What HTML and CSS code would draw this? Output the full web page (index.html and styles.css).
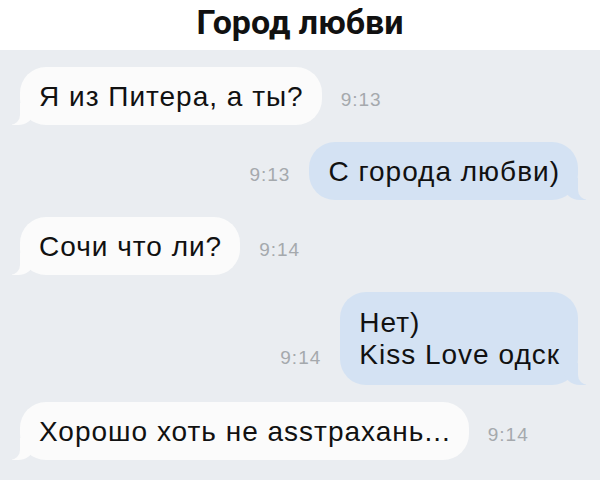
FILE: index.html
```html
<!DOCTYPE html>
<html lang="ru">
<head>
    <meta charset="UTF-8">
    <meta name="viewport" content="width=device-width, initial-scale=1.0">
    <title>Город любви</title>
    <link rel="stylesheet" href="styles.css">
</head>
<body>
    <header class="header">
        <h1>Город любви</h1>
    </header>

    <div class="chat">
        <!-- incoming -->
        <div class="row in">
            <div class="bubble">Я из Питера, а ты?</div>
            <span class="time">9:13</span>
        </div>

        <!-- outgoing -->
        <div class="row out">
            <span class="time">9:13</span>
            <div class="bubble">С города любви)</div>
        </div>

        <div class="row in">
            <div class="bubble">Сочи что ли?</div>
            <span class="time">9:14</span>
        </div>

        <div class="row out">
            <span class="time">9:14</span>
            <div class="bubble multi">Нет)<br>Kiss Love одск</div>
        </div>

        <div class="row in">
            <div class="bubble">Хорошо хоть не assтрахань...</div>
            <span class="time">9:14</span>
        </div>
    </div>
</body>
</html>
```

FILE: styles.css
```css
body {
    margin: 0;
    padding: 0;
    width: 600px;
    height: 480px;
    overflow: hidden;
    font-family: "Liberation Sans", Arial, sans-serif;
    background-color: #eaedf1;
    color: #111;
}

.header {
    background: #fff;
    height: 50px;
    padding-top: 4px;
    box-sizing: border-box;
    text-align: center;
}

.header h1 {
    margin: 0;
    font-family: Roboto, "Liberation Sans", sans-serif;
    font-size: 34px;
    line-height: 37px;
    font-weight: 700;
    color: #111;
}

.chat {
    padding: 17px 22px 0 20px;
    display: flex;
    flex-direction: column;
    gap: 17px;
}

.row {
    display: flex;
    align-items: last baseline;
    gap: 19px;
}

.row.out {
    justify-content: flex-end;
}

.bubble {
    position: relative;
    font-size: 28px;
    line-height: 33px;
    letter-spacing: 1px;
    padding: 13px 18px 12px 19px;
    border-radius: 26px;
    background: #fbfbfb;
}

.bubble.multi {
    line-height: 32px;
    padding-top: 15px;
    padding-bottom: 14px;
}

.out .bubble {
    background: #d4e2f3;
}

/* tails */
.bubble::before,
.bubble::after {
    content: "";
    position: absolute;
    bottom: 0;
    height: 22px;
}

.in .bubble::before {
    left: -8px;
    width: 22px;
    background: #fbfbfb;
    border-bottom-right-radius: 16px 14px;
}

.in .bubble::after {
    left: -24px;
    width: 24px;
    background: #eaedf1;
    border-bottom-right-radius: 10px;
}

.out .bubble::before {
    right: -8px;
    width: 22px;
    background: #d4e2f3;
    border-bottom-left-radius: 16px 14px;
}

.out .bubble::after {
    right: -24px;
    width: 24px;
    background: #eaedf1;
    border-bottom-left-radius: 10px;
}

.time {
    font-size: 19px;
    letter-spacing: 1px;
    color: #a5a9ad;
}
```
